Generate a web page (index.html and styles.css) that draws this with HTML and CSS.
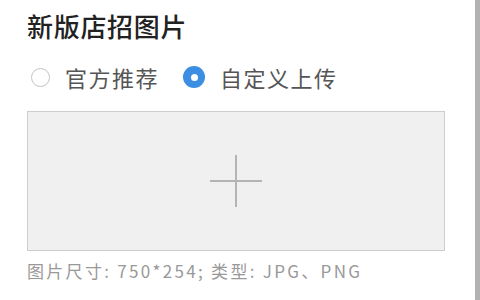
FILE: index.html
```html
<!DOCTYPE html>
<html lang="zh">
<head>
<meta charset="utf-8">
<link rel="stylesheet" href="styles.css">
</head>
<body>
<div class="page">
  <div class="panel">
    <div class="title">新版店招图片</div>
    <div class="options">
      <label class="option">
        <span class="radio"></span>
        <span class="label">官方推荐</span>
      </label>
      <label class="option">
        <span class="radio checked"></span>
        <span class="label">自定义上传</span>
      </label>
    </div>
    <div class="upload">
      <svg class="plus" width="54" height="54" viewBox="0 0 54 54">
        <path d="M1 27H53M27 1V53" stroke="#b4b4b4" stroke-width="2" fill="none"/>
      </svg>
    </div>
    <div class="hint">图片尺寸: 750*254; 类型: JPG、PNG</div>
  </div>
  <div class="bar"></div>
</div>
</body>
</html>
```
FILE: styles.css
```css
html, body {
  margin: 0;
  padding: 0;
  background: #fff;
}
.page {
  display: flex;
  width: 480px;
  height: 300px;
  font-family: "Noto Sans CJK SC", "Noto Sans", sans-serif;
}
.panel {
  flex: 1;
  padding: 9px 0 0 27px;
}
.title {
  font-size: 26px;
  font-weight: 500;
  line-height: 34px;
  color: #222;
  letter-spacing: 0.7px;
}
.options {
  display: flex;
  align-items: center;
  gap: 20px;
  margin-top: 19px;
  height: 30px;
}
.option {
  display: flex;
  align-items: center;
  gap: 15px;
}
.radio {
  width: 17px;
  height: 17px;
  border: 1.5px solid #c4c4c4;
  border-radius: 50%;
  margin-left: 4px;
  box-sizing: content-box;
}
.radio.checked {
  width: 22px;
  height: 22px;
  border: none;
  background: #3c8ee3;
  display: flex;
  align-items: center;
  justify-content: center;
}
.radio.checked::after {
  content: "";
  width: 7px;
  height: 7px;
  border-radius: 50%;
  background: #fff;
}
.label {
  font-size: 22px;
  line-height: 30px;
  color: #555;
  letter-spacing: 1.5px;
}
.upload {
  box-sizing: border-box;
  width: 418px;
  height: 140px;
  margin-top: 19px;
  border: 1px solid #cdcdcd;
  background: #f0f0f0;
  display: flex;
  align-items: center;
  justify-content: center;
}
.hint {
  margin-top: 8px;
  font-family: "Noto Sans CJK SC", sans-serif;
  font-size: 17px;
  line-height: 24px;
  color: #999;
  letter-spacing: 2.3px;
}
.bar {
  width: 5px;
  background: #b2b2b2;
}
```
